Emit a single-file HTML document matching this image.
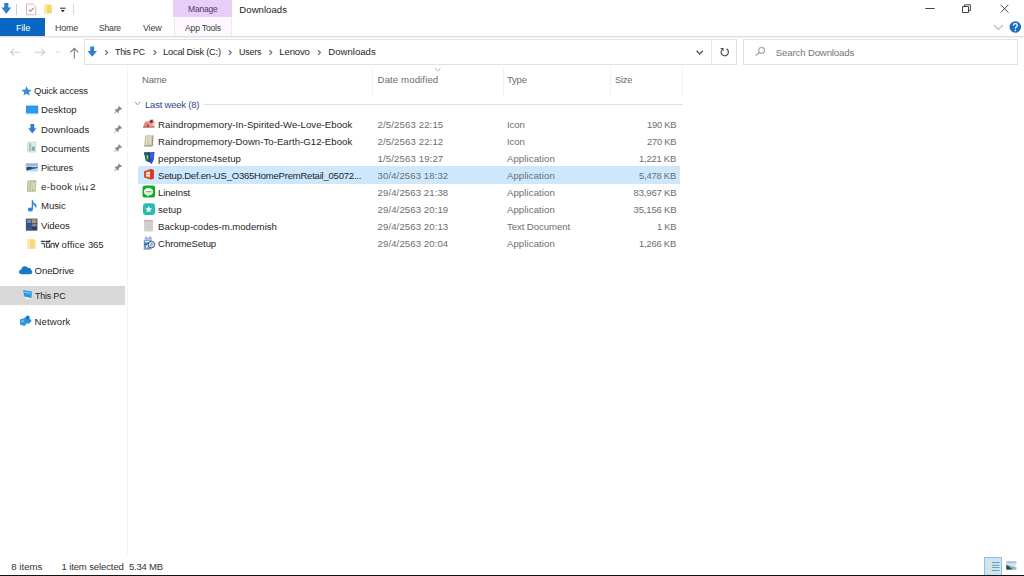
<!DOCTYPE html>
<html>
<head>
<meta charset="utf-8">
<title>Downloads</title>
<style>
html,body{margin:0;padding:0;}
body{width:1024px;height:576px;overflow:hidden;background:#fff;position:relative;font-family:"Liberation Sans",sans-serif;font-size:9.6px;color:#1f1f1f;}
.a{position:absolute;}
.t{position:absolute;white-space:nowrap;line-height:12px;height:12px;}
svg{position:absolute;overflow:visible;}
</style>
</head>
<body>
<!-- title bar -->
<div class="a" style="left:173.4px;top:0;width:58.4px;height:17.4px;background:#e7cdf8;"></div>
<div class="a" style="left:174px;top:17.4px;width:58px;height:18.6px;background:#fdf8ff;"></div>
<div class="a" style="left:174px;top:18px;width:1px;height:18px;background:#ebebeb;"></div>
<div class="a" style="left:231px;top:18px;width:1px;height:18px;background:#ebebeb;"></div>
<div class="a" style="left:16px;top:4px;width:1px;height:11px;background:#cfcfcf;"></div>
<div class="a" style="left:73px;top:4px;width:1px;height:11px;background:#d8d8d8;"></div>
<!-- ribbon tabs -->
<div class="a" style="left:0;top:18px;width:44.8px;height:18.2px;background:#0a66c4;box-shadow:inset -1px -1px 0 #1d5fa6, inset 0 1px 0 #1d5fa6;"></div>
<div class="a" style="left:0;top:36px;width:1024px;height:1px;background:#e0e0e0;"></div>
<div class="a" style="left:0;top:37px;width:1024px;height:1px;background:#f2f2f2;"></div>
<!-- address bar -->
<div class="a" style="left:84px;top:39px;width:653px;height:26px;border:1px solid #e1e1e1;box-sizing:border-box;"></div>
<div class="a" style="left:711px;top:40px;width:1px;height:24px;background:#e6e6e6;"></div>
<div class="a" style="left:743px;top:39px;width:275px;height:26px;border:1px solid #e1e1e1;box-sizing:border-box;"></div>
<!-- sidebar -->
<div class="a" style="left:0;top:286px;width:125px;height:19px;background:#d9d9d9;"></div>
<div class="a" style="left:126.6px;top:66px;width:1px;height:490px;background:#f4f4f4;"></div>
<!-- column header separators -->
<div class="a" style="left:372px;top:67px;width:1px;height:29px;background:#f3f3f3;"></div>
<div class="a" style="left:503px;top:67px;width:1px;height:29px;background:#f3f3f3;"></div>
<div class="a" style="left:610px;top:67px;width:1px;height:29px;background:#f3f3f3;"></div>
<div class="a" style="left:682px;top:67px;width:1px;height:29px;background:#f3f3f3;"></div>
<!-- group line -->
<div class="a" style="left:204px;top:104px;width:479px;height:1px;background:#e0e0e0;"></div>
<!-- selected row -->
<div class="a" style="left:138.2px;top:166.2px;width:541.5px;height:17.4px;background:#cde8fd;"></div>
<!-- status bar -->
<div class="a" style="left:984px;top:557px;width:18px;height:18px;background:#c9e6f8;border:1px solid #97bedb;border-bottom:none;box-sizing:border-box;"></div>
<div class="a" style="left:0;top:575px;width:1024px;height:1px;background:#141414;"></div>

<!-- ICONS -->
<svg width="1024" height="576" viewBox="0 0 1024 576" style="left:0;top:0;">
<!-- titlebar: blue down arrow -->
<path d="M4.2 3 H8.4 V7.6 H11.2 L6.3 13.8 L1.4 7.6 H4.2 Z" fill="#2f7fd1"/>
<!-- doc with check -->
<path d="M26.5 4 H33 L35.8 6.8 V14.8 H26.5 Z" fill="#fdfdfd" stroke="#c9b9b6" stroke-width="0.9"/>
<path d="M28.8 9.6 L30.5 11.3 L33.8 7.9" fill="none" stroke="#b97f6f" stroke-width="1.1"/>
<!-- folder -->
<path d="M44.2 4.6 H50.2 L51.8 5.8 V13.6 H44.2 Z" fill="#f5d767"/>
<path d="M44.2 4.6 H47 V13.6 H44.2 Z" fill="#f9e8a6"/>
<!-- qat dropdown -->
<path d="M60 8.2 H65.6" stroke="#222" stroke-width="1"/>
<path d="M60.8 9.9 H64.8 L62.8 12.3 Z" fill="#222"/>

<!-- window controls -->
<path d="M925.4 8.5 H934.6" stroke="#3a3a3a" stroke-width="0.95"/>
<path d="M962.5 6.5 H968.5 V12.5 H962.5 Z" fill="none" stroke="#3a3a3a" stroke-width="0.95"/>
<path d="M964.5 6.5 V4.8 H970.4 V10.6 H968.6" fill="none" stroke="#3a3a3a" stroke-width="0.95"/>
<path d="M1000.6 4.8 L1008.4 12.6 M1008.4 4.8 L1000.6 12.6" stroke="#3a3a3a" stroke-width="0.95"/>
<!-- ribbon collapse chevron + help -->
<path d="M994 25.2 L998.4 29.4 L1002.8 25.2" fill="none" stroke="#b4b4b4" stroke-width="1.1"/>
<circle cx="1015.3" cy="27" r="5.8" fill="#1b6fc2"/>
<path d="M1013.4 25.6 Q1013.4 23.6 1015.3 23.6 Q1017.3 23.6 1017.3 25.4 Q1017.3 26.6 1015.4 27.6 V28.6" fill="none" stroke="#fff" stroke-width="1.3"/>
<circle cx="1015.4" cy="30.4" r="0.8" fill="#fff"/>

<!-- nav arrows -->
<path d="M20.4 52.2 H10.6 M14 48.9 L10.6 52.2 L14 55.5" fill="none" stroke="#cdcdcd" stroke-width="1.1"/>
<path d="M34.6 52.2 H44.6 M41.2 48.9 L44.6 52.2 L41.2 55.5" fill="none" stroke="#cdcdcd" stroke-width="1.1"/>
<path d="M56.2 51 L58.3 53 L60.4 51" fill="none" stroke="#d6d6d6" stroke-width="1"/>
<path d="M74.3 58.4 V48.4 M70.3 52.4 L74.3 48.3 L78.3 52.4" fill="none" stroke="#7c7c7c" stroke-width="1.1"/>
<!-- address blue arrow -->
<path d="M90.2 46.6 H94.2 V51 H97 L92.2 56.8 L87.4 51 H90.2 Z" fill="#2f7fd1"/>
<!-- breadcrumb chevrons -->
<g fill="none" stroke="#6a6a6a" stroke-width="1.2">
<path d="M105.2 50.3 L107.6 52.6 L105.2 54.9"/>
<path d="M153.6 50.3 L156 52.6 L153.6 54.9"/>
<path d="M228.8 50.3 L231.2 52.6 L228.8 54.9"/>
<path d="M269.4 50.3 L271.8 52.6 L269.4 54.9"/>
<path d="M318 50.3 L320.4 52.6 L318 54.9"/>
</g>
<!-- address dropdown -->
<path d="M696.6 50.8 L699.7 53.9 L702.8 50.8" fill="none" stroke="#555" stroke-width="1.4"/>
<!-- refresh -->
<path d="M726.5 48.9 A3.65 3.65 0 1 1 721.9 49.8" fill="none" stroke="#555" stroke-width="1.25"/>
<path d="M720 48.1 H723.7 V51.3 Z" fill="#555"/>
<!-- search magnifier -->
<circle cx="761.6" cy="50.4" r="2.9" fill="none" stroke="#a0a0a0" stroke-width="1.1"/>
<path d="M759.5 52.6 L755.6 55.6" stroke="#a0a0a0" stroke-width="1.2"/>

<!-- sort chevron -->
<path d="M435 68.4 L437.8 70.9 L440.6 68.4" fill="none" stroke="#a8a8a8" stroke-width="0.9"/>
<!-- group chevron -->
<path d="M135.2 102.2 L137.6 104.9 L140.5 101.7" fill="none" stroke="#959595" stroke-width="0.95"/>
</svg>
<!-- SIDEBAR ICONS -->
<svg width="1024" height="576" viewBox="0 0 1024 576" style="left:0;top:0;">
<!-- quick access star -->
<path d="M26.6 86.3 L28 89.6 L31.6 89.9 L28.9 92.2 L29.8 95.6 L26.6 93.8 L23.4 95.6 L24.3 92.2 L21.4 89.9 L25.2 89.6 Z" fill="#3b8bd9"/>
<!-- desktop -->
<rect x="26" y="105.6" width="12.2" height="7.4" fill="#1f8ff0"/>
<rect x="26" y="112.8" width="12.2" height="1.3" fill="#7cc4f6"/>
<rect x="26.8" y="106.4" width="10.6" height="5.6" fill="#2b9af5"/>
<!-- downloads arrow -->
<path d="M30.4 124 H34.2 V128.2 H36.4 L32.3 133.4 L28.2 128.2 H30.4 Z" fill="#2f7fd1"/>
<!-- documents -->
<path d="M27.6 142.2 H35.8 V152 H27.6 Z" fill="#e4ebe8" stroke="#c3cfcc" stroke-width="0.7"/>
<path d="M29 143.4 H31.4 V151 H29 Z" fill="#a9c4bd"/>
<path d="M32.2 146.6 H34.6 V150.6 H32.2 Z" fill="#6f9fa0"/>
<!-- pictures -->
<rect x="25.8" y="163.4" width="12.2" height="8" fill="#b9d6ec"/>
<rect x="25.8" y="163.4" width="12.2" height="2.4" fill="#8fb9dc"/>
<path d="M26.4 167.2 Q29 166.4 31.4 167.1 Q34 167.6 37.6 167.1 L37.6 167.9 Q33 168.6 30.6 169.6 Q28 170.5 26.4 169.9 Z" fill="#234a78"/>
<!-- e-book -->
<path d="M27.4 181.4 Q27.6 180.2 29 180.2 H36.4 L35.8 190.6 Q35.6 191.8 34.4 191.8 H26.8 Z" fill="#b9bd92"/>
<path d="M29.4 181.2 L28.8 190.8 M32.2 181.2 L31.6 190.8" stroke="#e4e6cc" stroke-width="1"/>
<path d="M33.4 182.4 H35.4 L35 189.6 H33 Z" fill="#d9dcc0"/>
<!-- music -->
<path d="M32.4 200.2 V209.2" stroke="#2a8ad8" stroke-width="1.4" fill="none"/>
<path d="M32.4 200.2 Q33.4 203 36.2 204.6 Q37 206.6 35.6 208.6 Q36 206 32.4 204 Z" fill="#2a8ad8"/>
<ellipse cx="30.4" cy="209.6" rx="2.6" ry="2.1" fill="#2a8ad8"/>
<!-- videos -->
<rect x="25.9" y="218.6" width="11.5" height="12.1" fill="#4a5468"/>
<rect x="27.2" y="219.6" width="3.6" height="3.4" fill="#6f8fc6"/>
<rect x="31.8" y="219.4" width="4.6" height="4" fill="#a89a7a"/>
<rect x="27.2" y="224" width="4" height="5.6" fill="#2f5aa0"/>
<rect x="32.2" y="224.2" width="4.2" height="2.2" fill="#8596ae"/>
<rect x="32.2" y="227.2" width="4.2" height="2.4" fill="#2f3a50"/>
<path d="M26 223.6 H37.4 M26 226.8 H37.4" stroke="#39435a" stroke-width="0.6"/>
<!-- yellow folder -->
<path d="M27 239.3 H34 L35.5 240.4 V248.7 H27 Z" fill="#f7d985"/>
<path d="M27 239.3 H30 V248.7 H27 Z" fill="#fbe9b4"/>
<path d="M34 240.4 H35.5 V248.7 H34 Z" fill="#f9e3a0"/>
<!-- onedrive cloud -->
<path d="M21.6 274.2 Q19 274.2 19 271.8 Q19 269.8 21.2 269.4 Q21.6 266.6 24.6 266.2 Q27 266 28.2 268 Q29 267.6 29.8 268 Q31.2 268.6 31 270 Q32.4 270.6 32.3 272.2 Q32.2 274.2 30 274.2 Z" fill="#1a78ca"/>
<!-- this pc -->
<path d="M23.2 290 L32 291.4 L31.4 298 L24.2 296.6 Z" fill="#2a9ae0"/>
<path d="M24.2 291.2 L31 292.4 L30.6 294 L24.4 293 Z" fill="#63c0f0"/>
<path d="M24.4 297 L31.2 298.4 L30.8 299.6 L25 298.4 Z" fill="#f2f2f2"/>
<!-- network -->
<path d="M20 319.4 L24.6 318 L27.2 315.2 L29.8 316.2 L29.4 318.6 L31.6 320.4 L29.6 323.6 L26.4 323.4 L24.6 326 L20 324.6 Z" fill="#2a90e0"/>
<path d="M21 320.4 L24.2 319.6 L24.2 322.2 L21 322.8 Z" fill="#63b8f2"/>
<path d="M26.6 317 L29 317.2 L28.6 319.2 L26.6 319 Z" fill="#1b62a8"/>
<!-- pins -->
<g fill="#8a8a8a">
<path d="M119 106 L122.2 109 L121.2 109.8 L120.2 109.4 L118.6 111.4 L118.6 112.8 L117.8 113.2 L116.6 111.8 L114.2 114 L113.9 113.8 L116 111.2 L114.8 109.8 L115.4 109.2 L116.8 109.2 L118.6 107.6 L118.2 106.6 Z"/>
<path d="M119 125 L122.2 128 L121.2 128.8 L120.2 128.4 L118.6 130.4 L118.6 131.8 L117.8 132.2 L116.6 130.8 L114.2 133 L113.9 132.8 L116 130.2 L114.8 128.8 L115.4 128.2 L116.8 128.2 L118.6 126.6 L118.2 125.6 Z"/>
<path d="M119 144.2 L122.2 147.2 L121.2 148 L120.2 147.6 L118.6 149.6 L118.6 151 L117.8 151.4 L116.6 150 L114.2 152.2 L113.9 152 L116 149.4 L114.8 148 L115.4 147.4 L116.8 147.4 L118.6 145.8 L118.2 144.8 Z"/>
<path d="M119 163.4 L122.2 166.4 L121.2 167.2 L120.2 166.8 L118.6 168.8 L118.6 170.2 L117.8 170.6 L116.6 169.2 L114.2 171.4 L113.9 171.2 L116 168.6 L114.8 167.2 L115.4 166.6 L116.8 166.6 L118.6 165 L118.2 164 Z"/>
</g>
</svg>
<!-- FILE ICONS -->
<svg width="1024" height="576" viewBox="0 0 1024 576" style="left:0;top:0;">
<!-- row1: salmon icon -->
<path d="M143 127.4 L144.8 121.8 L148.8 121 L150.2 119.6 L153 119.3 L154.5 121.4 L154.3 127.4 Z" fill="#e6a092"/>
<path d="M143.2 127.4 L144.8 123 L148.6 122.6 L148.8 127.4 Z" fill="#dc8676"/>
<path d="M152.6 121 L154.5 121.6 L154.3 126 L152.6 126 Z" fill="#f2c6bd"/>
<circle cx="151.4" cy="121.6" r="1.6" fill="#93262a"/>
<path d="M143 126.4 H154.3 V127.5 H143 Z" fill="#b96a58"/>
<path d="M147.4 124.6 L149 124.6 L149 127 L147.4 127 Z" fill="#a04840"/>
<!-- row2: beige book -->
<path d="M145 136.2 Q145.2 135.2 146.4 135.2 H153.4 L152.9 145.2 Q152.7 146.4 151.5 146.4 H144.2 Z" fill="#cbc6ac"/>
<path d="M147 136.2 L146.4 145.4" stroke="#e8e3d2" stroke-width="1.1"/>
<path d="M148.6 136.4 H151.4 L151 143.8 H148.2 Z" fill="#dedac6"/>
<path d="M152.6 135.6 L153.4 135.4 L152.9 145.4 L152 145.8 Z" fill="#8e8a72"/>
<path d="M144.3 145.2 H152.6 L152 146.4 H144.2 Z" fill="#a9a58a"/>
<!-- row3: pepperstone -->
<path d="M144 152.5 L154.5 152 L153.8 159.6 L151.8 163.9 L149.4 162.2 L146 161 Z" fill="#2a50cc"/>
<path d="M144 152.5 L149.2 152.2 L148.8 161.6 L146 160.8 Z" fill="#1f5c5c"/>
<path d="M146.5 154.8 L148.3 155.2 L148.1 159.6 L146.8 159.2 Z" fill="#74e344"/>
<path d="M150.6 153.4 L153.4 153.2 L153 157.6 L150.6 158 Z" fill="#3f6be0"/>
<path d="M149.3 152.6 L150 152.6 L149.8 162 L149.2 161.8 Z" fill="#16308a"/>
<!-- row4: office -->
<path d="M144 171.2 L150.4 169 L153.7 170 V178.4 L150.4 179.4 L144 177.4 Z" fill="#df4a2c"/>
<path d="M146.2 172.4 L150 171.4 V177.2 L146.2 176.4 Z" fill="#f8ece4"/>
<path d="M146.2 174.2 H150 V175 H146.2 Z" fill="#f0b070"/>
<path d="M150.4 169 L153.7 170 V178.4 L150.4 179.4 Z" fill="#e0301e"/>
<!-- row5: LINE -->
<rect x="142.5" y="185.5" width="12.6" height="12.1" rx="2.6" fill="#10ad20"/>
<ellipse cx="148.5" cy="191.7" rx="4.5" ry="3.6" fill="#f0faf0"/>
<path d="M146.6 194.6 L147.8 196.4 L149.6 194.8 Z" fill="#f0faf0"/>
<path d="M145.8 191.7 H151.4" stroke="#7fb787" stroke-width="1.4"/>
<!-- row6: setup teal -->
<rect x="143" y="203.2" width="12" height="11.7" rx="3" fill="#27bcb2"/>
<path d="M148.70 206.00 L149.70 208.12 L152.03 208.42 L150.32 210.03 L150.76 212.33 L148.70 211.20 L146.64 212.33 L147.08 210.03 L145.37 208.42 L147.70 208.12 Z" fill="#eefafa"/>
<!-- row7: text doc -->
<rect x="144.1" y="220.4" width="8.9" height="11.1" fill="#d0d0d0"/>
<path d="M144.1 220.8 H153" stroke="#e88e9c" stroke-width="1"/>
<path d="M144.6 224.4 H152.6 M144.6 227.6 H152.6" stroke="#c6c6c6" stroke-width="0.6"/>
<!-- row8: chrome setup -->
<rect x="143.8" y="240.2" width="7.8" height="8.6" fill="#5f93c4"/>
<path d="M144.4 239.8 L145 237.2 L146.8 236.4 L148 238.6 L149.4 236.2 L151.4 237 L152 239.8 Z" fill="#a4ade2"/>
<path d="M145 241.6 H150.4 L146.2 247 H150" fill="none" stroke="#e6f0fa" stroke-width="1.1"/>
<path d="M144 244.4 L148 243.6" stroke="#2f5a78" stroke-width="0.8"/>
<circle cx="151.4" cy="244.6" r="3.3" fill="#d6e4f8" stroke="#3a4460" stroke-width="0.9"/>
<path d="M149.6 243.4 L152 242.6 L153.2 245 L150.8 246.8 Z" fill="#8eb4ea"/>
<path d="M143.6 249.2 H150.6" stroke="#6c8aa0" stroke-width="0.9"/>
</svg>
<!-- STATUS ICONS -->
<svg width="1024" height="576" viewBox="0 0 1024 576" style="left:0;top:0;">
<rect x="988.8" y="560.2" width="2.4" height="13.8" fill="#ece1c6"/>
<path d="M992 562.5 H999.6 M992 565.3 H999.6 M992 567.5 H999.6 M992 570.5 H999.6" stroke="#6f93ad" stroke-width="0.9"/>
<rect x="1006.4" y="561.2" width="10" height="8.4" fill="#d9e8f0"/>
<rect x="1006.4" y="561.2" width="10" height="2.2" fill="#b1c1e6"/>
<path d="M1006.4 564.4 Q1010 565.4 1016.4 567.8 V569.6 H1006.4 Z" fill="#8fb0b8"/>
<path d="M1006.4 565 Q1009 566 1012.4 569.6 H1006.4 Z" fill="#1f4650"/>
</svg>
<!-- THAI GLYPH APPROXIMATIONS -->
<svg width="1024" height="576" viewBox="0 0 1024 576" style="left:0;top:0;">
<g fill="none" stroke="#4e4e4e" stroke-width="0.95" stroke-linecap="round">
<!-- e-book [lem] 2 -->
<path d="M75.7 185.4 V190"/><circle cx="75.9" cy="189.7" r="0.5" fill="#4e4e4e" stroke="none"/>
<path d="M77.8 190.2 V186.9 Q79.2 185 80.7 186.9 V190.2"/>
<path d="M79.9 183.5 V184.5" stroke-width="0.8"/>
<path d="M82.9 185.6 V189.6 Q84 190.4 85 189.4"/>
<path d="M87 185.6 V190.2"/>
<circle cx="83.4" cy="189.5" r="0.7" fill="#333" stroke="none"/>
<circle cx="86.6" cy="189.5" r="0.7" fill="#333" stroke="none"/>
</g>
<g fill="none" stroke="#3a3a3a" stroke-width="1.05" stroke-linecap="round">
<!-- [withi long] office 365 -->
<path d="M41.6 243.4 Q44.4 242.6 44.4 245 V247.3"/>
<path d="M41.4 241.3 H45" stroke-width="1.3"/>
<path d="M46.2 243 H49.4 M46.4 243 V247.3 H49.6 V244.8"/>
<path d="M46 241.3 H50 M49.8 240.6 V241.6" stroke-width="1.3"/>
<path d="M51 247.4 V244.2 Q52.6 242.4 54.2 244.2 V247.4"/>
<path d="M55.4 243 L57 247.2 L58.7 242.8"/>
</g>
</svg>


<div class="t" style="left:187.60px;top:3px;color:#4f3a68;letter-spacing:-0.220px;transform:scaleX(0.8876);transform-origin:0 0;">Manage</div>
<div class="t" style="left:239.35px;top:4px;color:#222;letter-spacing:0.016px;">Downloads</div>
<div class="t" style="left:15.90px;top:22px;color:#ffffff;letter-spacing:-0.220px;transform:scaleX(0.9656);transform-origin:0 0;">File</div>
<div class="t" style="left:55.10px;top:22px;color:#3c3c3c;letter-spacing:-0.220px;transform:scaleX(0.9265);transform-origin:0 0;">Home</div>
<div class="t" style="left:99.10px;top:22px;color:#3c3c3c;letter-spacing:-0.220px;transform:scaleX(0.8937);transform-origin:0 0;">Share</div>
<div class="t" style="left:142.60px;top:22px;color:#3c3c3c;letter-spacing:-0.220px;transform:scaleX(0.9316);transform-origin:0 0;">View</div>
<div class="t" style="left:184.60px;top:22px;color:#3c3c3c;letter-spacing:-0.220px;transform:scaleX(0.8978);transform-origin:0 0;">App Tools</div>
<div class="t" style="left:115.10px;top:46px;color:#1f1f1f;letter-spacing:-0.220px;transform:scaleX(0.9175);transform-origin:0 0;">This PC</div>
<div class="t" style="left:163.10px;top:46px;color:#1f1f1f;letter-spacing:-0.220px;transform:scaleX(0.9711);transform-origin:0 0;">Local Disk (C:)</div>
<div class="t" style="left:238.85px;top:46px;color:#1f1f1f;letter-spacing:-0.220px;transform:scaleX(0.9242);transform-origin:0 0;">Users</div>
<div class="t" style="left:279.35px;top:46px;color:#1f1f1f;letter-spacing:-0.177px;">Lenovo</div>
<div class="t" style="left:328.35px;top:46px;color:#1f1f1f;letter-spacing:-0.015px;">Downloads</div>
<div class="t" style="left:775.85px;top:47px;color:#757575;letter-spacing:-0.145px;">Search Downloads</div>
<div class="t" style="left:34.10px;top:85px;color:#1f1f1f;letter-spacing:-0.220px;transform:scaleX(0.9901);transform-origin:0 0;">Quick access</div>
<div class="t" style="left:41.10px;top:104px;color:#1f1f1f;letter-spacing:0.066px;">Desktop</div>
<div class="t" style="left:41.10px;top:124px;color:#1f1f1f;letter-spacing:0.079px;">Downloads</div>
<div class="t" style="left:41.10px;top:143px;color:#1f1f1f;letter-spacing:-0.023px;">Documents</div>
<div class="t" style="left:41.10px;top:162px;color:#1f1f1f;letter-spacing:-0.220px;transform:scaleX(0.9693);transform-origin:0 0;">Pictures</div>
<div class="t" style="left:41.10px;top:181px;color:#1f1f1f;letter-spacing:0.331px;">e-book</div>
<div class="t" style="left:90.30px;top:181px;color:#1f1f1f;letter-spacing:0.356px;transform:scaleX(1.0667);transform-origin:0 0;">2</div>
<div class="t" style="left:41.10px;top:200px;color:#1f1f1f;letter-spacing:-0.116px;">Music</div>
<div class="t" style="left:41.10px;top:220px;color:#1f1f1f;letter-spacing:-0.114px;">Videos</div>
<div class="t" style="left:61.60px;top:239px;color:#1f1f1f;letter-spacing:0.107px;">office</div>
<div class="t" style="left:88.00px;top:239px;color:#1f1f1f;letter-spacing:-0.220px;transform:scaleX(0.9951);transform-origin:0 0;">365</div>
<div class="t" style="left:34.60px;top:265px;color:#1f1f1f;letter-spacing:-0.133px;">OneDrive</div>
<div class="t" style="left:34.60px;top:290px;color:#1f1f1f;letter-spacing:-0.220px;transform:scaleX(0.9328);transform-origin:0 0;">This PC</div>
<div class="t" style="left:34.60px;top:316px;color:#1f1f1f;letter-spacing:0.069px;">Network</div>
<div class="t" style="left:142.00px;top:74px;color:#6b6b6b;letter-spacing:-0.215px;">Name</div>
<div class="t" style="left:377.60px;top:74px;color:#6b6b6b;letter-spacing:0.116px;">Date modified</div>
<div class="t" style="left:506.90px;top:74px;color:#6b6b6b;letter-spacing:-0.220px;transform:scaleX(0.9924);transform-origin:0 0;">Type</div>
<div class="t" style="left:614.90px;top:74px;color:#6b6b6b;letter-spacing:-0.220px;transform:scaleX(0.9605);transform-origin:0 0;">Size</div>
<div class="t" style="left:144.80px;top:99px;color:#34458a;letter-spacing:-0.220px;transform:scaleX(0.9899);transform-origin:0 0;">Last week (8)</div>
<div class="t" style="left:158.10px;top:119px;color:#1f1f1f;letter-spacing:0.046px;">Raindropmemory-In-Spirited-We-Love-Ebook</div>
<div class="t" style="left:377.60px;top:119px;color:#6e6e6e;letter-spacing:0.121px;">2/5/2563 22:15</div>
<div class="t" style="left:506.90px;top:119px;color:#6e6e6e;letter-spacing:-0.047px;">Icon</div>
<div class="t" style="left:646.90px;top:119px;color:#6e6e6e;letter-spacing:-0.220px;transform:scaleX(0.9742);transform-origin:0 0;">190 KB</div>
<div class="t" style="left:158.10px;top:136px;color:#1f1f1f;letter-spacing:0.044px;">Raindropmemory-Down-To-Earth-G12-Ebook</div>
<div class="t" style="left:377.60px;top:136px;color:#6e6e6e;letter-spacing:0.121px;">2/5/2563 22:12</div>
<div class="t" style="left:506.90px;top:136px;color:#6e6e6e;letter-spacing:-0.047px;">Icon</div>
<div class="t" style="left:646.90px;top:136px;color:#6e6e6e;letter-spacing:-0.220px;transform:scaleX(0.9742);transform-origin:0 0;">270 KB</div>
<div class="t" style="left:158.10px;top:153px;color:#1f1f1f;letter-spacing:0.040px;">pepperstone4setup</div>
<div class="t" style="left:377.60px;top:153px;color:#6e6e6e;letter-spacing:0.121px;">1/5/2563 19:27</div>
<div class="t" style="left:506.90px;top:153px;color:#6e6e6e;letter-spacing:0.106px;">Application</div>
<div class="t" style="left:639.30px;top:153px;color:#6e6e6e;letter-spacing:-0.220px;transform:scaleX(0.9804);transform-origin:0 0;">1,221 KB</div>
<div class="t" style="left:158.10px;top:170px;color:#1f1f1f;letter-spacing:-0.220px;transform:scaleX(0.9915);transform-origin:0 0;">Setup.Def.en-US_O365HomePremRetail_05072...</div>
<div class="t" style="left:377.60px;top:170px;color:#6e6e6e;letter-spacing:0.089px;">30/4/2563 18:32</div>
<div class="t" style="left:506.90px;top:170px;color:#6e6e6e;letter-spacing:0.106px;">Application</div>
<div class="t" style="left:639.30px;top:170px;color:#6e6e6e;letter-spacing:-0.220px;transform:scaleX(0.9804);transform-origin:0 0;">5,478 KB</div>
<div class="t" style="left:158.10px;top:187px;color:#1f1f1f;letter-spacing:-0.216px;">LineInst</div>
<div class="t" style="left:377.60px;top:187px;color:#6e6e6e;letter-spacing:0.089px;">29/4/2563 21:38</div>
<div class="t" style="left:506.90px;top:187px;color:#6e6e6e;letter-spacing:0.106px;">Application</div>
<div class="t" style="left:633.60px;top:187px;color:#6e6e6e;letter-spacing:-0.220px;">83,967 KB</div>
<div class="t" style="left:158.10px;top:204px;color:#1f1f1f;letter-spacing:-0.021px;">setup</div>
<div class="t" style="left:377.60px;top:204px;color:#6e6e6e;letter-spacing:0.089px;">29/4/2563 20:19</div>
<div class="t" style="left:506.90px;top:204px;color:#6e6e6e;letter-spacing:0.106px;">Application</div>
<div class="t" style="left:633.60px;top:204px;color:#6e6e6e;letter-spacing:-0.220px;">35,156 KB</div>
<div class="t" style="left:158.10px;top:221px;color:#1f1f1f;letter-spacing:-0.028px;">Backup-codes-m.modernish</div>
<div class="t" style="left:377.60px;top:221px;color:#6e6e6e;letter-spacing:0.089px;">29/4/2563 20:13</div>
<div class="t" style="left:506.90px;top:221px;color:#6e6e6e;letter-spacing:-0.057px;">Text Document</div>
<div class="t" style="left:656.90px;top:221px;color:#6e6e6e;letter-spacing:-0.220px;transform:scaleX(0.9726);transform-origin:0 0;">1 KB</div>
<div class="t" style="left:158.10px;top:238px;color:#1f1f1f;letter-spacing:-0.110px;">ChromeSetup</div>
<div class="t" style="left:377.60px;top:238px;color:#6e6e6e;letter-spacing:0.089px;">29/4/2563 20:04</div>
<div class="t" style="left:506.90px;top:238px;color:#6e6e6e;letter-spacing:0.106px;">Application</div>
<div class="t" style="left:639.30px;top:238px;color:#6e6e6e;letter-spacing:-0.220px;transform:scaleX(0.9804);transform-origin:0 0;">1,266 KB</div>
<div class="t" style="left:11.30px;top:561px;color:#333;letter-spacing:0.010px;">8 items</div>
<div class="t" style="left:61.50px;top:561px;color:#333;letter-spacing:-0.152px;">1 item selected</div>
<div class="t" style="left:129.30px;top:561px;color:#333;letter-spacing:-0.220px;transform:scaleX(0.9909);transform-origin:0 0;">5.34 MB</div>
</body>
</html>
